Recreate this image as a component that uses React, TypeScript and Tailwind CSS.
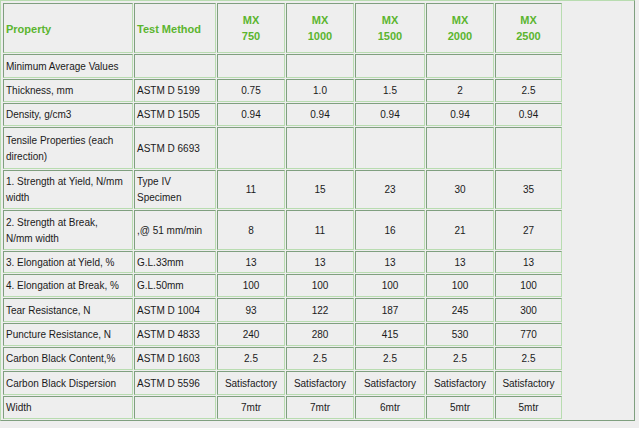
const cols = ['w-[130px]', 'w-[82px]', 'w-[68px]', 'w-[68px]', 'w-[70px]', 'w-[68px]', 'w-[67px]']

type Row = { label: string; method: string; values: string[]; h: string }

// labels use \n where the original wraps
const rows: Row[] = [
  { label: 'Minimum Average Values', method: '', values: ['', '', '', '', ''], h: 'h-[24px]' },
  { label: 'Thickness, mm', method: 'ASTM D 5199', values: ['0.75', '1.0', '1.5', '2', '2.5'], h: 'h-[23px]' },
  { label: 'Density, g/cm3', method: 'ASTM D 1505', values: ['0.94', '0.94', '0.94', '0.94', '0.94'], h: 'h-[23px]' },
  { label: 'Tensile Properties (each\ndirection)', method: 'ASTM D 6693', values: ['', '', '', '', ''], h: 'h-[42px]' },
  { label: '1. Strength at Yield, N/mm\nwidth', method: 'Type IV\nSpecimen', values: ['11', '15', '23', '30', '35'], h: 'h-[39px]' },
  { label: '2. Strength at Break,\nN/mm width', method: ',@ 51 mm/min', values: ['8', '11', '16', '21', '27'], h: 'h-[40px]' },
  { label: '3. Elongation at Yield, %', method: 'G.L.33mm', values: ['13', '13', '13', '13', '13'], h: 'h-[22px]' },
  { label: '4. Elongation at Break, %', method: 'G.L.50mm', values: ['100', '100', '100', '100', '100'], h: 'h-[23px]' },
  { label: 'Tear Resistance, N', method: 'ASTM D 1004', values: ['93', '122', '187', '245', '300'], h: 'h-[24px]' },
  { label: 'Puncture Resistance, N', method: 'ASTM D 4833', values: ['240', '280', '415', '530', '770'], h: 'h-[23px]' },
  { label: 'Carbon Black Content,%', method: 'ASTM D 1603', values: ['2.5', '2.5', '2.5', '2.5', '2.5'], h: 'h-[23px]' },
  { label: 'Carbon Black Dispersion', method: 'ASTM D 5596', values: ['Satisfactory', 'Satisfactory', 'Satisfactory', 'Satisfactory', 'Satisfactory'], h: 'h-[24px]' },
  { label: 'Width', method: '', values: ['7mtr', '7mtr', '6mtr', '5mtr', '5mtr'], h: 'h-[23px]' },
]

const grades = ['750', '1000', '1500', '2000', '2500']

const cell =
  'border border-t-[#7f9f7f] border-l-[#7f9f7f] border-b-[#b8dcb0] border-r-[#b8dcb0] align-middle'

export default function App() {
  return (
    <div className="w-[639px] h-[428px] bg-[#eeeeee] font-['Liberation_Sans',Arial,sans-serif] text-[10px] leading-[16px] text-[#1a1a1a]">
      <div className="w-[635px] h-[421px] border border-t-[#b8dcb0] border-l-[#b8dcb0] border-b-[#7f9f7f] border-r-[#7f9f7f] p-[1px]">
        <table className="table-fixed border-separate border-spacing-[1px] w-[561px]">
          <thead>
            <tr className="h-[50px]">
              <th className={`${cols[0]} ${cell} px-[2px] pt-[2px] text-left text-[11px] font-bold text-[#5bb52e]`}>Property</th>
              <th className={`${cols[1]} ${cell} px-[2px] pt-[2px] text-left text-[11px] font-bold text-[#5bb52e]`}>Test Method</th>
              {grades.map((g, i) => (
                <th key={g} className={`${cols[i + 2]} ${cell} text-center text-[11px] font-bold text-[#5bb52e]`}>
                  MX
                  <br />
                  {g}
                </th>
              ))}
            </tr>
          </thead>
          <tbody>
            {rows.map((r) => (
              <tr key={r.label} className={r.h}>
                <td className={`${cell} whitespace-pre-line px-[2px] pt-[1px]`}>{r.label}</td>
                <td className={`${cell} whitespace-pre-line px-[2px] pt-[1px]`}>{r.method}</td>
                {r.values.map((v, i) => (
                  <td key={i} className={`${cell} pt-[1px] text-center`}>
                    {v}
                  </td>
                ))}
              </tr>
            ))}
          </tbody>
        </table>
      </div>
    </div>
  )
}
